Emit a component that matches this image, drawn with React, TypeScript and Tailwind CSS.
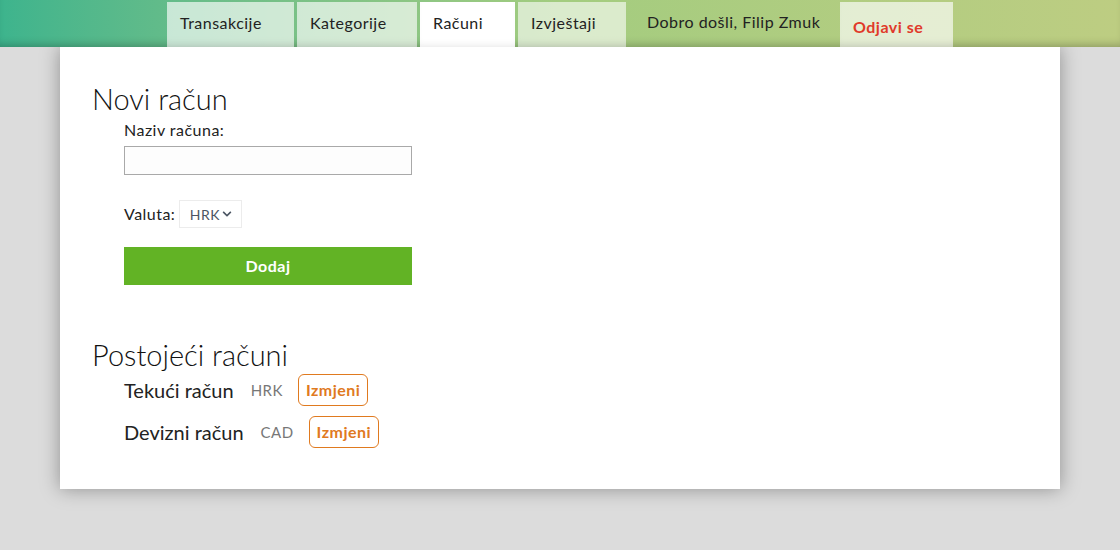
import { FaChevronDown } from "react-icons/fa";

const tabs = [
  { label: "Transakcije", w: "w-[127px]", bg: "bg-white/65" },
  { label: "Kategorije", w: "w-[120px]", bg: "bg-white/65" },
  { label: "Računi", w: "w-[95px]", bg: "bg-white" },
  { label: "Izvještaji", w: "w-[108px]", bg: "bg-white/60" },
];

const accounts = [
  { name: "Tekući račun", cur: "HRK" },
  { name: "Devizni račun", cur: "CAD" },
];

export default function App() {
  return (
    <div className="min-h-[550px] bg-[#dcdcdc] font-['Lato',sans-serif] tracking-[0.03em] text-[#222]">
      <header className="relative z-10 flex h-[47px] pt-[2px] bg-gradient-to-r from-[#3db48d] via-[#a3cc7f] to-[#bdcd82] shadow-[inset_0_-7px_8px_-5px_rgba(0,0,0,0.25)]">
        <div className="w-[167px]" />
        <nav className="flex gap-[3px]">
          {tabs.map((t) => (
            <a
              key={t.label}
              className={`${t.w} ${t.bg} flex h-full items-center pl-[13px] pb-[3px] text-[16px] text-[#222] shadow-[inset_0_-6px_8px_-6px_rgba(0,0,0,0.12)]`}
            >
              {t.label}
            </a>
          ))}
        </nav>
        <div className="flex w-[214px] items-center pl-[21px] pb-[5px] text-[16px] text-[#222]">
          Dobro došli, Filip Zmuk
        </div>
        <a className="flex w-[113px] items-center bg-white/65 pl-[13px] pt-[4px] text-[16px] font-bold text-[#e03a2a] shadow-[inset_0_-6px_8px_-6px_rgba(0,0,0,0.12)]">
          Odjavi se
        </a>
      </header>

      <main className="mx-[60px] bg-white px-8 pt-[33px] pb-[41px] shadow-[0_0_18px_rgba(0,0,0,0.35)]">
        <h2 className="text-[29px] font-light leading-[38px] tracking-normal text-[#111]">Novi račun</h2>
        <div className="pl-8">
          <label className="block text-[16px] leading-[24px]">Naziv računa:</label>
          <input className="mt-[4px] block h-[29px] w-[288px] border border-[#a9a9a9] bg-[#fdfdfd]" />
          <div className="mt-[25px] flex items-center gap-[4px]">
            <span className="text-[16px]">Valuta:</span>
            <div className="flex h-[28px] w-[63px] items-center justify-center gap-[2px] border border-[#ececec] text-[14px] text-[#4b5563]">
              HRK
              <FaChevronDown className="h-[10px] w-[10px]" />
            </div>
          </div>
          <button className="mt-[19px] h-[38px] w-[288px] bg-[#62b325] text-[16px] font-bold text-white">
            Dodaj
          </button>
        </div>

        <h2 className="mt-[51px] text-[29px] font-light leading-[38px] tracking-normal text-[#111]">Postojeći računi</h2>
        <div className="flex flex-col gap-[10px] pl-8">
          {accounts.map((a) => (
            <div key={a.name} className="flex items-center">
              <span className="text-[20px] tracking-normal">{a.name}</span>
              <span className="ml-[17px] text-[15px] text-[#777]">{a.cur}</span>
              <button className="ml-[15px] h-[32px] rounded-[6px] border border-[#e07a1f] px-[7px] text-[16px] font-bold text-[#e07a1f]">
                Izmjeni
              </button>
            </div>
          ))}
        </div>
      </main>
    </div>
  );
}
